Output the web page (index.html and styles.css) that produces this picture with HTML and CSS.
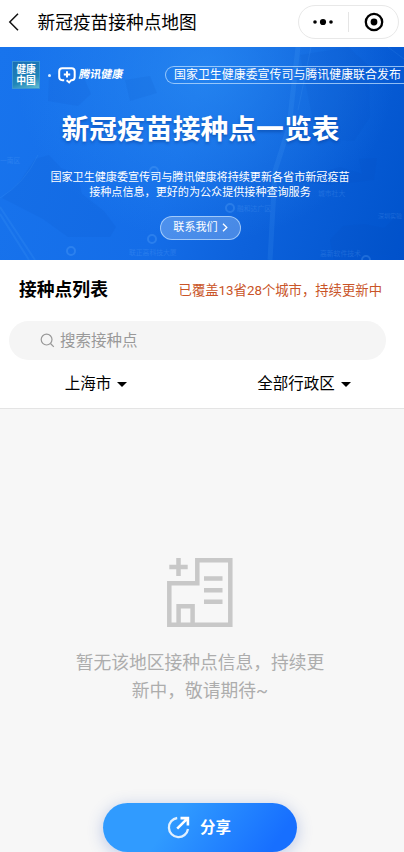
FILE: index.html
```html
<!DOCTYPE html>
<html lang="zh-CN">
<head>
<meta charset="utf-8">
<meta name="viewport" content="width=device-width, initial-scale=1">
<title>新冠疫苗接种点地图</title>
<link rel="stylesheet" href="styles.css">
</head>
<body>
<header class="nav">
  <svg class="back" width="12" height="18" viewBox="0 0 12 18"><path d="M10 .8 1.8 9l8.2 8.2" fill="none" stroke="#111" stroke-width="1.5"/></svg>
  <h1 class="nav-title">新冠疫苗接种点地图</h1>
  <div class="capsule">
    <svg width="20" height="8" viewBox="0 0 20 8"><circle cx="2" cy="4" r="1.8"/><circle cx="10" cy="4" r="3.1"/><circle cx="18" cy="4" r="1.8"/></svg>
    <span class="capsule-line"></span>
    <svg width="20" height="20" viewBox="0 0 20 20"><circle cx="10" cy="10" r="8.2" fill="none" stroke="#000" stroke-width="2.3"/><circle cx="10" cy="10" r="3.4"/></svg>
  </div>
</header>

<section class="banner">
  <svg class="map" width="404" height="213" viewBox="0 0 404 213">
    <g fill="#0648b8" opacity=".09">
      <path d="M35 112 49 108 61 121 77 127 82 147 104 164 116 180 110 190 68 190 43 172 14 157 2 151 18 137z"/>
      <path d="M300 8 348 0 369 19 370 70 354 94 330 92 334 78 313 74z"/>
      <path d="M293 134 340 120 362 127 359 112 377 111 374 133 330 138z"/>
      <path d="M330 193 343 179 364 177 384 181 404 162 404 213 334 213z"/>
      <path d="M49 29 80 22 91 47 78 59 48 54zM125 33 150 29 157 46 130 54z"/>
    </g>
    <g fill="none" stroke="#5eb2ff" opacity=".12">
      <path d="M0 160 35 213M0 167 29 213" stroke-width="2"/>
      <path d="M298 0 289 80 275 124 270 213" stroke-width="5"/>
      <path d="M38 108Q25 136 0 151M311 0 298 63M388 0 404 12"/>
    </g>
    <g fill="none" stroke="#71b8ff" stroke-width="2" opacity=".24">
      <circle cx="71" cy="204" r="4"/><circle cx="152" cy="192" r="4"/><circle cx="230" cy="161" r="4"/><circle cx="154" cy="124" r="4"/><circle cx="366" cy="213" r="4"/>
    </g>
    <g class="places">
      <text x="0" y="116">一南区</text><text x="129" y="208">联正高科技大厦</text><text x="237" y="164">融和达广区</text><text x="320" y="209">高新软件技术</text><text x="378" y="171" font-size="6">深圳实验</text><text x="318" y="149">城市社大</text>
    </g>
  </svg>
  <div class="brands">
    <div class="china"><span>健康</span><span>中国</span></div>
    <i class="dot"></i>
    <svg class="tencent" width="18" height="17" viewBox="0 0 18 17"><path d="M6.2 13.2H4.3Q1.2 13.2 1.2 10V4.4Q1.2 1.2 4.3 1.2h9.2q3.2 0 3.2 3.2V10q0 3.2-3.2 3.2h-.3l-2 2.2-2.6-2.2" fill="none" stroke="#fff" stroke-width="2"/><path d="M9 4.2v6.4M5.8 7.4h6.4" stroke="#fff" stroke-width="2"/></svg>
    <span class="tencent-name">腾讯健康</span>
    <div class="publisher">国家卫生健康委宣传司与腾讯健康联合发布</div>
  </div>
  <h2 class="hero">新冠疫苗接种点一览表</h2>
  <p class="intro">国家卫生健康委宣传司与腾讯健康将持续更新各省市新冠疫苗<br>接种点信息，更好的为公众提供接种查询服务</p>
  <a class="contact">联系我们<svg width="6" height="9" viewBox="0 0 6 9"><path d="M1 .8 4.8 4.5 1 8.2" fill="none" stroke="#fff" stroke-width="1.3"/></svg></a>
</section>

<section class="list-head">
  <div class="title-row">
    <h3>接种点列表</h3>
    <span class="coverage">已覆盖13省28个城市，持续更新中</span>
  </div>
  <div class="search">
    <svg width="15" height="15" viewBox="0 0 15 15"><g fill="none" stroke="#999" stroke-width="1.2"><circle cx="6.6" cy="6.6" r="5.4"/><path d="m10.5 10.5 3.3 3.3"/></g></svg>
    <span>搜索接种点</span>
  </div>
  <div class="filters">
    <div class="filter">上海市<i class="caret"></i></div>
    <div class="filter">全部行政区<i class="caret"></i></div>
  </div>
</section>

<main class="empty">
  <svg width="66" height="70" viewBox="0 0 66 70" fill="none" stroke="#c8c8c8" stroke-width="4.5"><path d="M30.3 25.3V2.3h33v64.4h-61V25.3zM11.6 66V48.3h14V66M11.5 0v18M2.3 9h18.4M37 20.6h18.5M37 32.2h18.5M37 43.8h18.5"/></svg>
  <p>暂无该地区接种点信息，持续更<br>新中，敬请期待~</p>
</main>

<footer class="footer">
  <button class="share"><svg width="23" height="23" viewBox="0 0 23 23" fill="none" stroke="#fff"><path d="M10.2 2A9.6 9.6 0 1 0 21 13" stroke-width="2.3" opacity=".85"/><path d="M10.2 12.6 20 2.8M13.5 2.1h7.4v7.4" stroke-width="2.6"/></svg><span>分享</span></button>
</footer>
</body>
</html>
```
FILE: styles.css
```css
* { box-sizing: border-box; margin: 0; padding: 0; }

body {
  height: 852px;
  display: flex;
  flex-direction: column;
  overflow: hidden;
  background: #f7f7f7;
  color: #000;
  font-family: Roboto, "Noto Sans CJK SC", sans-serif;
}

svg { display: block; flex: none; }

.nav {
  height: 46.5px;
  flex: none;
  display: flex;
  align-items: center;
  padding: 0 5px 3px 8px;
  background: #fff;
}
.nav-title {
  margin-left: 17.5px;
  font-size: 17.7px;
  font-weight: 400;
  line-height: 26px;
  padding-top: 2px;
}
.capsule {
  width: 101px;
  height: 34px;
  margin-left: auto;
  display: flex;
  align-items: center;
  justify-content: space-between;
  padding: 0 14px;
  border: 1px solid #e8e8e8;
  border-radius: 17px;
}
.capsule-line { width: 1px; height: 20px; margin-right: 1px; background: #e5e5e5; }

.banner {
  position: relative;
  height: 213px;
  flex: none;
  display: flex;
  flex-direction: column;
  align-items: center;
  padding-right: 3px;
  overflow: hidden;
  color: #fff;
  background:
    radial-gradient(ellipse 190px 170px at 205px 25px, rgba(46, 145, 244, .6), transparent),
    linear-gradient(108deg, #1874ed 0%, #146de8 45%, #0d62dc 65%, #0053cc 100%);
}
.map { position: absolute; inset: 0; }
.places { fill: #78b9ff; opacity: .2; font-size: 6.8px; }
.brands {
  position: relative;
  width: 404px;
  height: 28px;
  margin-top: 14.5px;
  margin-right: -3px;
  padding-left: 12px;
  display: flex;
  align-items: center;
}
.china {
  width: 28px;
  height: 28px;
  flex: none;
  padding-top: 2px;
  display: flex;
  flex-direction: column;
  align-items: center;
  background: linear-gradient(160deg, #1a6db4, #2086b9 65%, #62bed2);
  border: 1px solid #3c94d0;
  font-size: 9.8px;
  font-weight: 700;
  line-height: 11px;
}
.dot { width: 3px; height: 3px; margin-left: 8px; border-radius: 50%; background: #d9edff; }
.tencent { margin-left: 7px; }
.tencent-name {
  margin: -1px 0 0 3px;
  font-size: 11px;
  line-height: 16px;
  font-weight: 700;
  white-space: nowrap;
  transform: skewX(-10deg);
}
.publisher {
  width: 239px;
  height: 18px;
  flex: none;
  margin-left: auto;
  padding-left: 8px;
  border: 1px solid rgba(190, 223, 255, .75);
  border-right: 0;
  border-radius: 9px 0 0 9px;
  font-size: 11.95px;
  line-height: 17px;
  white-space: nowrap;
}
.hero {
  position: relative;
  margin-top: 20.5px;
  font-size: 27.8px;
  line-height: 40px;
  font-weight: 700;
  white-space: nowrap;
  text-shadow: 0 2px 3px rgba(0, 48, 130, .4);
}
.intro {
  position: relative;
  margin-top: 20px;
  padding-right: 1px;
  text-align: center;
  font-size: 11.08px;
  line-height: 15.7px;
  white-space: nowrap;
}
.contact {
  position: relative;
  width: 81px;
  height: 24px;
  margin-top: 14.6px;
  display: flex;
  align-items: center;
  justify-content: center;
  gap: 4px;
  border: 1px solid rgba(190, 221, 255, .75);
  border-radius: 12px;
  background: rgba(255, 255, 255, .24);
  font-size: 11.1px;
  line-height: 16px;
}

.list-head {
  height: 149px;
  flex: none;
  background: #fff;
  border-bottom: 1px solid #e4e4e4;
}
.title-row {
  height: 61.5px;
  padding: 0 22px 1px 19px;
  display: flex;
  align-items: center;
  justify-content: space-between;
}
.title-row h3 { font-size: 17.8px; font-weight: 700; line-height: 26px; }
.coverage { padding-top: 2px; font-size: 13.35px; line-height: 20px; color: #c95428; }
.search {
  height: 39px;
  margin: 0 18px 0 9px;
  padding-left: 31px;
  display: flex;
  align-items: center;
  gap: 5px;
  border-radius: 20px;
  background: #f5f5f5;
  color: #999;
  font-size: 15.5px;
  line-height: 24px;
}
.filters {
  height: 48px;
  display: grid;
  grid-template-columns: 192px 224px;
}
.filter {
  display: flex;
  align-items: center;
  justify-content: center;
  gap: 6px;
  font-size: 15.5px;
  line-height: 24px;
}
.caret { border: 5px solid transparent; border-top-color: #000; border-bottom: 0; }

.empty {
  flex: 1;
  padding-top: 149.5px;
  display: flex;
  flex-direction: column;
  align-items: center;
  color: #adadad;
}
.empty svg { margin-right: 4px; }
.empty p {
  margin-top: 20.5px;
  margin-right: 4px;
  font-size: 17.75px;
  line-height: 28px;
  text-align: center;
  white-space: nowrap;
}

.footer { height: 49px; flex: none; display: flex; justify-content: center; padding-right: 4px; }
.share {
  width: 194px;
  height: 49px;
  display: flex;
  align-items: center;
  justify-content: center;
  gap: 10px;
  padding-right: 2px;
  border: 0;
  border-radius: 25px;
  background: linear-gradient(125deg, #309bff 35%, #176fff 88%);
  box-shadow: 0 3px 16px rgba(45, 85, 190, .3);
  color: #fff;
  font: 700 15.5px/24px Roboto, "Noto Sans CJK SC", sans-serif;
}
```
